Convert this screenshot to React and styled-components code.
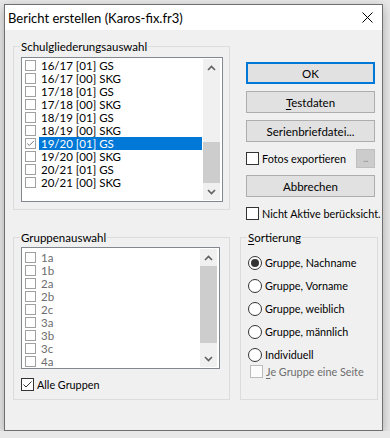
import styled, { createGlobalStyle } from "styled-components";

const Global = createGlobalStyle`
  html, body {
    margin: 0;
    padding: 0;
    background: #e8e8e8;
  }
  body {
    font-family: Lato, "Liberation Sans", sans-serif;
    font-size: 11px;
    color: #000;
  }
`;

const Window = styled.div`
  margin: 4px 0 0 4px;
  width: 379px;
  height: 427px;
  box-sizing: border-box;
  border: 1px solid #6f6f6f;
  background: #f0f0f0;
  box-shadow: 0 3px 10px rgba(0, 0, 0, 0.28);
  display: flex;
  flex-direction: column;
`;

const TitleBar = styled.div`
  height: 25px;
  flex-shrink: 0;
  background: #fff;
  display: flex;
  align-items: center;
  justify-content: space-between;
  padding: 0 9px 0 3px;
`;

const Title = styled.span`
  font-size: 13px;
  line-height: 16px;
`;

const Body = styled.div`
  display: grid;
  grid-template-columns: 217px 138px;
  grid-template-rows: 191px 171px;
  column-gap: 10px;
  padding: 9px 0 0 8px;
`;

const Group = styled.fieldset`
  margin: 0;
  padding: ${(p) => p.$pt}px 7px 0 7px;
  border: 1px solid #dcdcdc;
  min-width: 0;
  box-sizing: border-box;
  height: ${(p) => p.$h}px;
  display: flex;
  flex-direction: column;
`;

const Legend = styled.legend`
  padding: 0 1px;
  margin-left: -1px;
  line-height: 15px;
  font-size: 11.5px;
`;

const U = styled.span`
  text-decoration: underline;
  text-underline-offset: 2px;
`;

const ListBox = styled.div`
  width: ${(p) => p.$w}px;
  height: ${(p) => p.$h}px;
  box-sizing: border-box;
  border: 1px solid #828790;
  background: #fff;
  display: flex;
  padding: 1px 2px 1px 1px;
  flex-shrink: 0;
`;

const Items = styled.div`
  flex: 1;
  display: flex;
  flex-direction: column;
  padding-top: ${(p) => p.$pt}px;
  padding-right: 1px;
  overflow: hidden;
`;

const Item = styled.div`
  height: 13px;
  display: flex;
  align-items: center;
  padding-left: 2px;
  flex-shrink: 0;
`;

const ItemText = styled.span`
  flex: 1;
  height: 13px;
  line-height: 13px;
  margin-left: 3px;
  padding-left: 2px;
  font-size: 11.5px;
  white-space: nowrap;
  background: ${(p) => (p.$sel ? "#0078d7" : "transparent")};
  color: ${(p) => (p.$sel ? "#fff" : p.$dim ? "#6d6d6d" : "#000")};
`;

const ScrollBar = styled.div`
  width: 17px;
  background: #f0f0f0;
  display: flex;
  flex-direction: column;
  flex-shrink: 0;
`;

const ScrollArrow = styled.div`
  height: 17px;
  flex-shrink: 0;
  display: flex;
  align-items: center;
  justify-content: center;
`;

const Track = styled.div`
  flex: 1;
  display: flex;
  flex-direction: column;
  justify-content: ${(p) => (p.$end ? "flex-end" : "flex-start")};
`;

const Thumb = styled.div`
  height: ${(p) => p.$h}px;
  background: #cdcdcd;
`;

const Box = styled.span`
  width: ${(p) => p.$size}px;
  height: ${(p) => p.$size}px;
  box-sizing: border-box;
  border: 1px solid ${(p) => p.$border};
  background: ${(p) => p.$bg || "#fff"};
  display: inline-flex;
  align-items: center;
  justify-content: center;
  flex-shrink: 0;
`;

const CheckRow = styled.label`
  display: flex;
  align-items: center;
  height: ${(p) => p.$h || 15}px;
  margin-top: ${(p) => p.$mt || 0}px;
  padding-left: ${(p) => p.$pl || 0}px;
  color: ${(p) => (p.$dim ? "#6d6d6d" : "#000")};
  font-size: 10.8px;
  white-space: nowrap;
`;

const CheckText = styled.span`
  margin-left: 3px;
  line-height: 15px;
`;

const Buttons = styled.div`
  display: flex;
  flex-direction: column;
  padding: 23px 0 0 6px;
`;

const Button = styled.button`
  width: 129px;
  height: 22px;
  margin-bottom: 7px;
  box-sizing: border-box;
  padding: 0;
  background: #e1e1e1;
  border: ${(p) => (p.$primary ? "2px solid #0078d7" : "1px solid #adadad")};
  font-family: inherit;
  font-size: 11.5px;
  color: #000;
`;

const FotoRow = styled.div`
  width: 129px;
  height: 19px;
  margin-bottom: 7px;
  display: flex;
  align-items: center;
  justify-content: space-between;
`;

const SmallButton = styled.button`
  width: 19px;
  height: 19px;
  box-sizing: border-box;
  padding: 0 0 4px;
  background: #cccccc;
  border: 1px solid #bfbfbf;
  color: #8a8a8a;
  font-family: inherit;
  font-size: 9px;
  line-height: 9px;
  letter-spacing: -0.5px;
  display: flex;
  align-items: flex-end;
  justify-content: center;
`;

const Radios = styled.div`
  display: flex;
  flex-direction: column;
  gap: 6px;
  padding-top: 9px;
`;

const RadioRow = styled.label`
  display: flex;
  align-items: center;
  height: 17px;
  font-size: 10.8px;
`;

const Circle = styled.span`
  width: 14px;
  height: 14px;
  box-sizing: border-box;
  border: 1px solid #333;
  border-radius: 50%;
  background: #fff;
  display: inline-flex;
  align-items: center;
  justify-content: center;
  flex-shrink: 0;
  &::after {
    content: "";
    width: 8px;
    height: 8px;
    border-radius: 50%;
    background: ${(p) => (p.$on ? "#333" : "transparent")};
  }
`;

function Check({ checked, size = 13, border = "#333", color = "#333", bg }) {
  return (
    <Box $size={size} $border={border} $bg={bg}>
      {checked && (
        <svg width={size - 2} height={size - 2} viewBox="0 0 11 11">
          <polyline points="1.5,5.5 4,8 9.5,2.5" fill="none" stroke={color} strokeWidth="1" />
        </svg>
      )}
    </Box>
  );
}

function Chevron({ down }) {
  return (
    <svg width="9" height="6" viewBox="0 0 9 6">
      <polyline
        points={down ? "1,1 4.5,4.5 8,1" : "1,5 4.5,1.5 8,5"}
        fill="none"
        stroke="#606060"
        strokeWidth="1.6"
      />
    </svg>
  );
}

function List({ w, h, pt, items, thumbH, thumbEnd, dim }) {
  return (
    <ListBox $w={w} $h={h}>
      <Items $pt={pt}>
        {items.map((it) => (
          <Item key={it.text}>
            <Check size={11} border="#a0a0a0" color="#555" checked={it.checked} />
            <ItemText $sel={it.selected} $dim={dim}>
              {it.text}
            </ItemText>
          </Item>
        ))}
      </Items>
      <ScrollBar>
        <ScrollArrow>
          <Chevron />
        </ScrollArrow>
        <Track $end={thumbEnd}>
          <Thumb $h={thumbH} />
        </Track>
        <ScrollArrow>
          <Chevron down />
        </ScrollArrow>
      </ScrollBar>
    </ListBox>
  );
}

const schul = [
  { text: "16/17 [01] GS" },
  { text: "16/17 [00] SKG" },
  { text: "17/18 [01] GS" },
  { text: "17/18 [00] SKG" },
  { text: "18/19 [01] GS" },
  { text: "18/19 [00] SKG" },
  { text: "19/20 [01] GS", checked: true, selected: true },
  { text: "19/20 [00] SKG" },
  { text: "20/21 [01] GS" },
  { text: "20/21 [00] SKG" },
];

const gruppen = ["1a", "1b", "2a", "2b", "2c", "3a", "3b", "3c", "4a"].map((t) => ({ text: t }));

const sortierung = [
  "Gruppe, Nachname",
  "Gruppe, Vorname",
  "Gruppe, weiblich",
  "Gruppe, männlich",
  "Individuell",
];

export default function App() {
  return (
    <>
      <Global />
      <Window>
        <TitleBar>
          <Title>Bericht erstellen (Karos-fix.fr3)</Title>
          <svg width="11" height="11" viewBox="0 0 11 11">
            <path d="M0.5,0.5 L10.5,10.5 M10.5,0.5 L0.5,10.5" stroke="#000" strokeWidth="1" />
          </svg>
        </TitleBar>
        <Body>
          <Group $h={171} $pt={3}>
            <Legend>Schulgliederungsauswahl</Legend>
            <List w={202} h={145} pt={0} items={schul} thumbH={41} thumbEnd />
          </Group>

          <Buttons>
            <Button $primary>OK</Button>
            <Button>
              <U>T</U>estdaten
            </Button>
            <Button>Serienbriefdatei...</Button>
            <FotoRow>
              <CheckRow $h={19}>
                <Check />
                <CheckText>Fotos exportieren</CheckText>
              </CheckRow>
              <SmallButton disabled>...</SmallButton>
            </FotoRow>
            <Button>Abbrechen</Button>
            <CheckRow $h={13} $mt={3}>
              <Check />
              <CheckText>Nicht Aktive berücksicht.</CheckText>
            </CheckRow>
          </Buttons>

          <Group $h={170} $pt={2}>
            <Legend>Gruppenauswahl</Legend>
            <List w={199} h={122} pt={2} items={gruppen} thumbH={77} dim />
            <CheckRow $h={15} $mt={8}>
              <Check checked />
              <CheckText>Alle Gruppen</CheckText>
            </CheckRow>
          </Group>

          <Group $h={170} $pt={0}>
            <Legend>
              <U>S</U>ortierung
            </Legend>
            <Radios>
              {sortierung.map((s, i) => (
                <RadioRow key={s}>
                  <Circle $on={i === 0} />
                  <CheckText>{s}</CheckText>
                </RadioRow>
              ))}
            </Radios>
            <CheckRow $h={13} $mt={2} $pl={2} $dim>
              <Check border="#bcbcbc" bg="#fcfcfc" />
              <CheckText>
                <U>J</U>e Gruppe eine Seite
              </CheckText>
            </CheckRow>
          </Group>
        </Body>
      </Window>
    </>
  );
}
